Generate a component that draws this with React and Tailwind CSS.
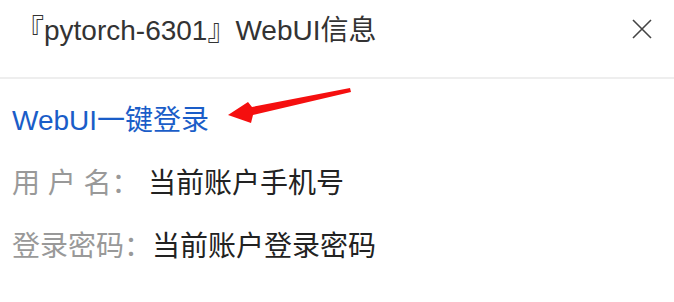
import React from 'react';

const font = { fontFamily: '"Liberation Sans", "Noto Sans CJK SC", sans-serif' };

const Arrow = () => (
    <svg width="132" height="42" viewBox="0 0 132 42" className="absolute left-[226px] top-[86px]">
        <path d="M2 29 L22 16 L26 21 L124 2 L125 6 L27 29 L25 37 Z" fill="#f50f0f" />
    </svg>
);

const App = () => {
    return (
        <div className="relative w-[674px] h-[302px] bg-white overflow-hidden" style={font}>
            <div className="h-[79px] flex items-start justify-between pl-[16px] pr-[22px] pt-[12px] border-b-2 border-[#eeeeee]">
                <h1 className="text-[28px] leading-[38px] text-[#333333]">『pytorch-6301』WebUI信息</h1>
                <svg width="20" height="20" viewBox="0 0 20 20" className="text-[#444] mt-[7px]">
                    <path d="M1 1 L19 19 M19 1 L1 19" stroke="currentColor" strokeWidth="1.6" />
                </svg>
            </div>

            <div className="pl-[12px] pt-[25px] flex flex-col gap-[29px] text-[28px] leading-[34px]">
                <a href="#" className="text-[#1a5dc8] w-fit">WebUI一键登录</a>
                <div className="flex">
                    <span className="text-[#999999] w-[136px] shrink-0">用 户 名：</span>
                    <span className="text-[#222222]">当前账户手机号</span>
                </div>
                <div className="flex">
                    <span className="text-[#999999] shrink-0">登录密码：</span>
                    <span className="text-[#222222]">当前账户登录密码</span>
                </div>
            </div>

            <Arrow />
        </div>
    );
};

export default App;
